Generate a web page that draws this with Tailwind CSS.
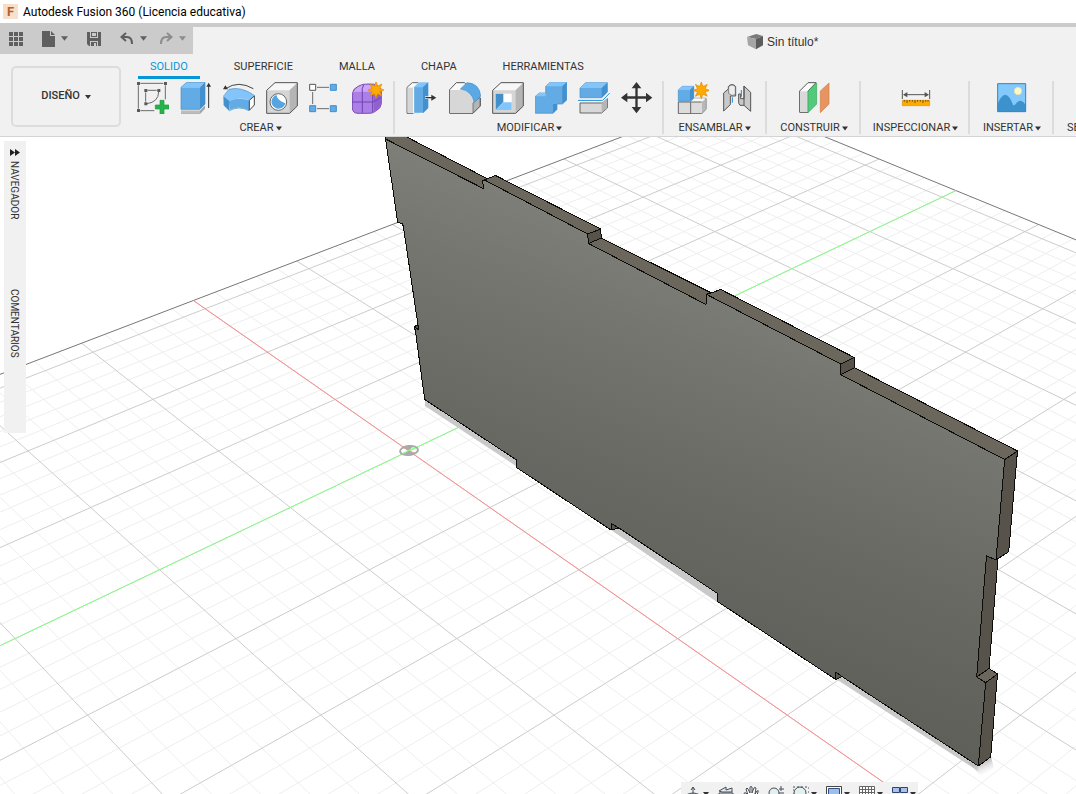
<!DOCTYPE html>
<html lang="es">

<head>
    <meta charset="UTF-8">
    <meta name="viewport" content="width=device-width, initial-scale=1.0">
    <title>Autodesk Fusion 360 (Licencia educativa)</title>
    <script src="https://cdn.jsdelivr.net/npm/@tailwindcss/browser@4"></script>
</head>

<body class="h-screen flex flex-col overflow-hidden bg-white font-['Roboto','Liberation_Sans',sans-serif] text-[11px] text-[#333]">
    <!-- shared glyphs -->
    <svg class="hidden">
        <symbol id="caret" viewBox="0 0 6 4"><path d="M0 0h6L3 4z" fill="currentColor" /></symbol>
        <symbol id="star" viewBox="-25 -25 50 50">
            <path d="M0-24 4.600-11 17-17 11-4.600 24 0 11 4.600 17 17 4.600 11 0 24-4.600 11-17 17-11 4.600-24 0-11-4.600-17-17-4.600-11z" fill="#ffaa00" stroke="#e08a00" stroke-width="2" />
        </symbol>
    </svg>

    <header class="shrink-0">
        <div class="h-[23px] flex items-center gap-[5px] pl-[3px] text-[12px] text-black bg-white">
            <span class="size-[15px] flex items-center justify-center bg-linear-to-br from-[#f9dcc0] to-[#f6e3d4] text-[13px] font-bold text-[#b8622a]">F</span>
            <h1>Autodesk Fusion 360 (Licencia educativa)</h1>
        </div>

        <!-- quick access bar + document title -->
        <div class="flex bg-[#f1f1f1] border-t-4 border-[#cbcbcb]">
            <nav class="w-[193px] h-[27px] pb-1 pl-[9px] flex items-center bg-[#cbcbcb] text-[#5f5f5f]">
                <button aria-label="Panel de datos">
                    <svg class="w-[14px] h-[14px]" viewBox="0 0 14 14" fill="currentColor"><path d="M0 0h4v4H0zM5 0h4v4H5zM10 0h4v4h-4zM0 5h4v4H0zM5 5h4v4H5zM10 5h4v4h-4zM0 10h4v4H0zM5 10h4v4H5zM10 10h4v4h-4z" /></svg>
                </button>
                <button class="ml-[19px] flex items-center gap-[6px]" aria-label="Archivo">
                    <svg class="w-[13px] h-[16px]" viewBox="0 0 13 16" fill="currentColor"><path d="M0 0h8v5h5v11H0z" /><path d="M9 0l4 4H9z" /></svg>
                    <svg class="w-[7px] h-[5px]"><use href="#caret" /></svg>
                </button>
                <button class="ml-[19px]" aria-label="Guardar">
                    <svg class="w-[14px] h-[14px]" viewBox="0 0 14 14"><path d="M0 0h14v14H2L0 12z" fill="currentColor" /><path d="M3 0h8v6H3zM3 9h8v5H3z" fill="#cbcbcb" /><path d="M4 0h6v5H4zM4 10h6v4H4z" fill="currentColor" /><path d="M5 1h4v3H5zM7 11h2v3H7z" fill="#cbcbcb" /></svg>
                </button>
                <button class="ml-[19px] flex items-center gap-[7px]" aria-label="Deshacer">
                    <svg class="w-[13px] h-[13px]" viewBox="0 0 13 13" fill="none" stroke="currentColor" stroke-width="2"><path d="M6 1 1.500 5 6 9M2 5h5q5 0 5 7" /></svg>
                    <svg class="w-[7px] h-[5px]"><use href="#caret" /></svg>
                </button>
                <button class="ml-[13px] flex items-center gap-[6px] text-[#8d8d8d]" aria-label="Rehacer">
                    <svg class="w-[13px] h-[13px]" viewBox="0 0 13 13" fill="none" stroke="currentColor" stroke-width="2"><path d="M7 1 11.500 5 7 9M11 5H6Q1 5 1 12" /></svg>
                    <svg class="w-[7px] h-[5px]"><use href="#caret" /></svg>
                </button>
            </nav>
            <div class="flex-1 pt-[2px] pl-[554px] flex items-center gap-[4px] font-['Liberation_Sans',sans-serif] text-[12px]">
                <svg class="w-[16px] h-[16px]" viewBox="0 0 48 48"><path d="M0 9 28 0 48 6 27 15z" fill="#7a7a7a" /><path d="M0 9 27 15V46L3 34z" fill="#a5a5a5" /><path d="M27 15 48 6V34L27 46z" fill="#5c5c5c" /></svg>
                <span>Sin título*</span>
            </div>
        </div>

        <!-- ribbon -->
        <div class="h-[83px] flex bg-[#f1f1f1] border-b border-[#d4d4d4] overflow-hidden">
            <button class="w-[110px] h-[61px] mt-[12px] ml-[11px] mr-[7px] shrink-0 flex items-center justify-center gap-[5px] border-2 border-[#dcdcdc] rounded-[5px] font-medium">
                DISEÑO <svg class="w-[6px] h-[4px]"><use href="#caret" /></svg>
            </button>
            <div class="flex-1 min-w-0">
                <nav class="h-[25px] pl-[10px] flex gap-[22px]">
                    <a href="#" class="px-3 pt-[5px] leading-4 text-[#0696d7] border-b-[3px] border-[#0696d7]">SOLIDO</a>
                    <a href="#" class="px-3 pt-[5px] leading-4">SUPERFICIE</a>
                    <a href="#" class="px-3 pt-[5px] leading-4">MALLA</a>
                    <a href="#" class="px-3 pt-[5px] leading-4">CHAPA</a>
                    <a href="#" class="px-3 pt-[5px] leading-4">HERRAMIENTAS</a>
                </nav>
                <div class="mt-[2px] flex whitespace-nowrap">
                    <section class="w-[267px] h-[53px] pt-px shrink-0 flex flex-col items-center gap-[6px] border-r-2 border-[#dcdcdc]">
                        <div class="flex gap-[11px]">
                            <button aria-label="Crear boceto">
                                <svg class="size-8" viewBox="0 0 96 96" fill="none" stroke="#6b6b6b" stroke-width="3"><path d="M10 4H79M4 10V80M10 86H52M85 10V52M32 25H59M26 31V59M65 30Q64 60 30 65" /><path d="M0 0h9v9H0zM81 0h9v9h-9zM0 81h9v9H0zM22 21h9v9h-9zM61 21h9v9h-9zM22 61h9v9h-9z" fill="#5a5a5a" stroke="none" /><path d="M69 55h12v14h15v12H81v15H69V81H55V69h14z" fill="#27b34c" stroke="#1b9a3d" stroke-width="2" /></svg>
                            </button>
                            <button aria-label="Extruir">
                                <svg class="size-8" viewBox="0 0 96 96"><path d="M3 86H60L75 70V80L60 96H3z" fill="#a4a4a4" /><path d="M3 86H60V95H3z" fill="#bdbdbd" /><path d="M3 16 20 1H75L60 16z" fill="#83c5fb" /><path d="M3 16H60V82H3z" fill="#62abe4" /><path d="M60 16 75 1V66L60 82z" fill="#4290cd" /><path d="M3 16 20 1H75V66L60 82H3z" fill="none" stroke="#438fc9" stroke-width="2" /><path d="M86 78V10" stroke="#333" stroke-width="3" /><path d="M79 14h14L86 2z" fill="#333" /></svg>
                            </button>
                            <button aria-label="Revolución">
                                <svg class="size-8" viewBox="0 0 96 96"><path d="M1 45 18 22Q55 12 95 41L78 55Q48 43 18 57z" fill="#83c5fb" /><path d="M18 57Q48 44 78 55V85Q48 68 20 84z" fill="#62abe4" /><path d="M1 43 19 57V86L2 69z" fill="#4290cd" /><path d="M1 43 18 22Q55 12 95 41M2 69 19 86Q48 70 78 86" fill="none" stroke="#438fc9" stroke-width="2" /><path d="M79 55 94 42V69L79 85z" fill="#fff" stroke="#444" stroke-width="3" /><path d="M8 20Q46-6 91 20" fill="none" stroke="#444" stroke-width="3" /><path d="M0 22 7 10 15 22z" fill="#333" /></svg>
                            </button>
                            <button aria-label="Agujero">
                                <svg class="size-8" viewBox="0 0 96 96" stroke-linejoin="round"><path d="M2 25 27 2H94V72L71 94H2z" fill="#d5d5d5" /><path d="M2 25 27 2H94L71 25z" fill="#f7f7f7" /><path d="M71 25 94 2V72L71 94z" fill="#b5b5b5" /><path d="M2 25 27 2H94V72L71 94H2z" fill="none" stroke="#555" stroke-width="3" /><circle cx="37" cy="60" r="25" fill="#fff" stroke="#666" stroke-width="3" /><path d="M31 39Q35 56 58 64A21 21 0 1 1 31 39z" fill="#56a5e0" /></svg>
                            </button>
                            <button aria-label="Patrón">
                                <svg class="size-8" viewBox="0 0 96 96"><path d="M24 16H60M24 80H60M11 30V66" stroke="#6b6b6b" stroke-width="3" /><path d="M2 7h18v18H2z" fill="#fff" stroke="#555" stroke-width="3" /><path d="M64 7h18v18H64zM2 71h18v18H2zM64 71h18v18H64z" fill="#62abe4" stroke="#438fc9" stroke-width="3" /></svg>
                            </button>
                            <button aria-label="Crear forma">
                                <svg class="size-8" viewBox="0 0 96 96"><path d="M2 32Q3 20 20 12Q32 5 50 6Q84 4 88 28V65Q88 78 70 88Q63 95 45 94H18Q2 94 1 78z" fill="#ab7ee8" stroke="#7d4bb8" stroke-width="3" /><path d="M4 31Q12 11 42 8Q66 8 78 18Q76 29 58 29H20Q9 29 4 31z" fill="#cda6fa" /><path d="M65 30 87 22V66Q84 78 66 87z" fill="#9160cf" /><path d="M35 9Q28 20 31 33V93M2 60H62Q77 54 87 46M62 31V90" fill="none" stroke="#7044ae" stroke-width="3" /><svg x="46" y="-2" width="52" height="52"><use href="#star" /></svg></svg>
                            </button>
                        </div>
                        <button class="flex items-center gap-[2px] leading-4">CREAR <svg class="w-[6px] h-[5px]"><use href="#caret" /></svg></button>
                    </section>

                    <section class="w-[269px] h-[53px] pt-px pl-[2px] shrink-0 flex flex-col items-center gap-[6px] border-r-2 border-[#dcdcdc]">
                        <div class="flex gap-[11px]">
                            <button aria-label="Pulsar o tirar">
                                <svg class="size-8" viewBox="0 0 96 96"><path d="M3 16 19 2H38V94H3z" fill="#fafafa" stroke="#666" stroke-width="3" /><path d="M5 17H22V92H5z" fill="#d6d6d6" /><path d="M23 16 39 1H67V78L51 94H23z" fill="#62abe4" stroke="#fff" stroke-width="3" /><path d="M23 16 39 1H67L51 16z" fill="#83c5fb" /><path d="M51 16 67 1V78L51 94z" fill="#4290cd" /><path d="M57 47H80" stroke="#fff" stroke-width="8" /><path d="M58 47H80" stroke="#333" stroke-width="4" /><path d="M76 38 91 47 76 56z" fill="#333" /></svg>
                            </button>
                            <button aria-label="Empalme">
                                <svg class="size-8" viewBox="0 0 96 96"><path d="M2 23 22 2H46L94 48V72L72 94H2z" fill="#fafafa" stroke="#555" stroke-width="3" /><path d="M3 24H34Q70 26 72 63V93H3z" fill="#d7d7d7" /><path d="M72 63 93 46V72L72 93z" fill="#b5b5b5" stroke="#555" stroke-width="2" /><path d="M34 21 54 2Q92 4 95 43L75 61Q70 27 34 21z" fill="#5ba9e4" stroke="#438fc9" stroke-width="2" /></svg>
                            </button>
                            <button aria-label="Vaciado">
                                <svg class="size-8" viewBox="0 0 96 96"><path d="M2 25 27 2H94V72L71 94H2z" fill="#d5d5d5" /><path d="M2 25 27 2H94L71 25z" fill="#f7f7f7" /><path d="M71 25 94 2V72L71 94z" fill="#b5b5b5" /><path d="M2 25 27 2H94V72L71 94H2z" fill="none" stroke="#555" stroke-width="3" /><path d="M11 35H59V84H11z" fill="#fff" /><path d="M11 35H34V60L11 84z" fill="#438fc9" /><path d="M11 84 34 61H59V84z" fill="#83c5fb" /></svg>
                            </button>
                            <button aria-label="Combinar">
                                <svg class="size-8" viewBox="0 0 96 96" stroke="#438fc9" stroke-width="2"><path d="M1 43 13 33H32V13L45 1H95V54L82 66H66V82L54 94H1z" fill="#62abe4" /><path d="M1 43 13 33H32V43zM32 13 45 1H95L82 13z" fill="#83c5fb" stroke="none" /><path d="M82 13 95 1V54L82 66zM54 66H66V82L54 94z" fill="#4290cd" stroke="none" /></svg>
                            </button>
                            <button aria-label="Dividir cuerpo">
                                <svg class="size-8" viewBox="0 0 96 96"><path d="M6 18 23 2H88V30L71 47H6z" fill="#62abe4" stroke="#438fc9" stroke-width="2" /><path d="M6 18 23 2H88L71 18z" fill="#83c5fb" /><path d="M71 18 88 2V30L71 47z" fill="#4290cd" /><path d="M6 63H71L88 50V78L71 93H6z" fill="#d8d8d8" stroke="#666" stroke-width="3" /><path d="M71 63 87 50V78L71 92z" fill="#b5b5b5" /><path d="M0 55H74L95 33" fill="none" stroke="#fff" stroke-width="8" /><path d="M0 55H74L95 33" fill="none" stroke="#0c8be0" stroke-width="3" /></svg>
                            </button>
                            <button aria-label="Desplazar">
                                <svg class="size-8" viewBox="0 0 96 96" fill="#333"><path d="M43 12h7v31h31v7H50v31h-7V50H12v-7h31z" /><path d="M46.500 0 61 19H32zM46.500 94 61 75H32zM0 47 19 32V61zM94 47 75 32V61z" /></svg>
                            </button>
                        </div>
                        <button class="flex items-center gap-[2px] leading-4">MODIFICAR <svg class="w-[6px] h-[5px]"><use href="#caret" /></svg></button>
                    </section>

                    <section class="w-[103px] h-[53px] pt-px shrink-0 flex flex-col items-center gap-[6px] border-r-2 border-[#dcdcdc]">
                        <div class="flex gap-[11px]">
                            <button aria-label="Nuevo componente">
                                <svg class="size-8" viewBox="0 0 96 96"><path d="M4 60H39L52 49H87V82L74 95H4z" fill="#dcdcdc" stroke="#666" stroke-width="3" /><path d="M39 60 52 49H87L74 60z" fill="#f8f8f8" /><path d="M41 60V94M41 60H74" stroke="#666" stroke-width="3" /><path d="M75 60 86 50V82L75 93z" fill="#b8b8b8" /><path d="M4 24 16 13H50V48L39 58H4z" fill="#62abe4" stroke="#438fc9" stroke-width="2" /><path d="M4 24 16 13H50L39 24z" fill="#83c5fb" /><path d="M39 24 50 13V48L39 58z" fill="#4290cd" /><svg x="47" y="-1" width="52" height="52"><use href="#star" /></svg></svg>
                            </button>
                            <button aria-label="Unión">
                                <svg class="size-8" viewBox="0 0 96 96" stroke="#555" stroke-width="3"><path d="M11 33 25 21V14Q28 8 36 8T47 14V42H31V68L11 87z" fill="#c9c9c9" /><path d="M26 20V34Q36 45 46 38V14Q36 4 26 14z" fill="#ededed" stroke-width="2" /><path d="M72 12 92 31V88L72 70H60Q56 66 56 60V36H62V50H72z" fill="#c9c9c9" /><path d="M72 12V70" /><path d="M37 46V62M64 24V44" stroke="#1686dc" /></svg>
                            </button>
                        </div>
                        <button class="flex items-center gap-[2px] leading-4">ENSAMBLAR <svg class="w-[6px] h-[5px]"><use href="#caret" /></svg></button>
                    </section>

                    <section class="w-[94px] h-[53px] pt-px pl-[2px] shrink-0 flex flex-col items-center gap-[6px] border-r-2 border-[#dcdcdc]">
                        <button aria-label="Plano desfasado">
                            <svg class="size-8" viewBox="0 0 96 96"><path d="M5 27 30 2H54L30 27V91H5z" fill="#fafafa" stroke="#555" stroke-width="3" /><path d="M6 28H29V90H6z" fill="#d9d9d9" /><path d="M30 27 56 3V66L30 92z" fill="#52c97b" stroke="#36a65d" stroke-width="2" /><path d="M67 27 93 3V66L67 92z" fill="#e79560" stroke="#cf7a43" stroke-width="2" /></svg>
                        </button>
                        <button class="flex items-center gap-[2px] leading-4">CONSTRUIR <svg class="w-[6px] h-[5px]"><use href="#caret" /></svg></button>
                    </section>

                    <section class="w-[109px] h-[53px] pt-px pl-[2px] shrink-0 flex flex-col items-center gap-[6px] border-r-2 border-[#dcdcdc]">
                        <button aria-label="Medir">
                            <svg class="size-8" viewBox="0 0 96 96"><path d="M7 24V51M89 24V51M14 38H82" stroke="#555" stroke-width="3" /><path d="M9 38 22 30V46zM87 38 74 30V46z" fill="#555" /><path d="M7 55H89V71H7z" fill="#ffaa00" stroke="#e09600" stroke-width="2" /><path d="M13 54v5M21 54v9M29 54v5M37 54v5M45 54v9M53 54v5M61 54v5M69 54v9M77 54v5M84 54v5" stroke="#725000" stroke-width="3" /></svg>
                        </button>
                        <button class="flex items-center gap-[2px] leading-4">INSPECCIONAR <svg class="w-[6px] h-[5px]"><use href="#caret" /></svg></button>
                    </section>

                    <section class="w-[84px] h-[53px] pt-px pl-[2px] shrink-0 flex flex-col items-center gap-[6px] border-r-2 border-[#dcdcdc]">
                        <button aria-label="Insertar imagen">
                            <svg class="size-8" viewBox="0 0 96 96"><path d="M5 5H89V89H5z" fill="#83c9fc" /><path d="M5 66Q14 40 28 38Q40 38 51 68Q54 73 59 66Q67 55 74 56Q82 57 89 68V89H5z" fill="#3c92cd" /><circle cx="66" cy="27" r="11" fill="#fdf8c9" stroke="#eee29a" stroke-width="2" /><path d="M5 5H89V89H5z" fill="none" stroke="#3485c0" stroke-width="3" /></svg>
                        </button>
                        <button class="flex items-center gap-[2px] leading-4">INSERTAR <svg class="w-[6px] h-[5px]"><use href="#caret" /></svg></button>
                    </section>

                    <section class="h-[53px] pt-[39px] px-[13px] shrink-0">
                        <button class="flex items-center gap-[2px] leading-4">SELECCIONAR <svg class="w-[6px] h-[5px]"><use href="#caret" /></svg></button>
                    </section>
                </div>
            </div>
        </div>
    </header>

    <main class="relative flex-1 min-h-0 overflow-hidden">
        <svg class="w-full h-full" viewBox="0 137 1076 657" preserveAspectRatio="xMinYMin slice">
            <defs>
                <linearGradient id="face" gradientUnits="userSpaceOnUse" x1="385" y1="139" x2="251" y2="498">
                    <stop offset="0" stop-color="#7e7f78" />
                    <stop offset=".25" stop-color="#74756e" />
                    <stop offset=".6" stop-color="#696963" />
                    <stop offset="1" stop-color="#5f5f59" />
                </linearGradient>
                <linearGradient id="fade" gradientUnits="userSpaceOnUse" x1="982" y1="762" x2="988" y2="776">
                    <stop offset="0" stop-color="#bbb" />
                    <stop offset="1" stop-color="#fff" stop-opacity="0" />
                </linearGradient>
            </defs>
            <g fill="none">
                <path id="grid-minor" stroke="#eeeeee" />
                <path id="grid-major" stroke="#cccccc" />
                <path id="grid-edge" stroke="#777" />
                <path id="axis-x" stroke="#ff8c8c" />
                <path id="axis-y" stroke="#86ff86" />
            </g>
            <!-- origin marker -->
            <g transform="rotate(-6 409 450.500)">
                <ellipse cx="409" cy="450.500" rx="9" ry="4.500" fill="none" stroke="#aaa" stroke-width="2" />
                <path d="M409 450.500 402 446.500Q407 444.500 414 446.500zM409 450.500 403 454Q409 456 415 453.500z" fill="#aaa" />
            </g>
            <path d="M404 447.500 413 453.500" stroke="#ff8c8c" />
            <path d="M402 453.500 415 447.500" stroke="#86ff86" />
            <!-- board: shadow, side faces, front face -->
            <path d="M425 400 978 764 978 771 836 679 717 602 611 530 516 466 425 406z" fill="#c9c9c9" />
            <path d="M968 762 991 757 994 768 981 776z" fill="url(#fade)" />
            <g stroke="#0c0c0a" stroke-linejoin="round" shape-rendering="crispEdges">
                <g fill="#6c675d">
                    <path d="M385.500 139 385 134H401L487 178.500 482.500 181 483.700 188.700z" />
                    <path d="M484 180 495.500 175.500 600.700 229 587.700 234z" />
                    <path d="M588.500 243.500 601.300 238 710.500 292.500 706.700 294.500 706 304.500z" />
                    <path d="M706.700 294.500 720.700 289.500 854.300 357.500 840.700 364z" />
                    <path d="M840.700 374.700 854.300 367.700 1017.500 451 1004.700 459.500z" />
                </g>
                <g fill="#57534a">
                    <path d="M587.700 234 600.700 229 601.300 238 588.500 243.500z" />
                    <path d="M840.700 364 854.300 357.500V367.700L840.700 374.700z" />
                    <path d="M1004.700 459.500 1017.500 451 1008.700 551.700 996 560z" />
                    <path d="M986.500 555.700 996 560 998 558.500 989 669 976.700 677z" />
                    <path d="M985.700 682.700 997.500 674 990.700 757 978.300 766z" />
                    <path d="M414.300 326.500 418 325 418.700 330H415z" />
                    <path d="M611 523.500 619 528 611 530z" />
                    <path d="M835.700 672 842 676.500 835.700 679.500z" />
                </g>
                <path d="M976.700 677 989 668.500 997.500 674 985.700 682.700z" fill="#6c675d" />
                <path fill="url(#face)" d="M385.500 139 483.700 188.700 482.500 180 484.500 180 587.700 234 588.500 243.500 706 304.500 706.700 294.500 840.700 364V374.700L1004.700 459.500 996 560 986.500 555.700 976.700 677 985.700 682.700 978.300 766 842 676.500 835.700 672V679.500L717.500 601.500V593.500L619 528 611 523.500V530L516.500 467.500V460L424.700 399.500 415.300 330 414.300 326.500 418.700 330 418 325 403.300 226 402 223.500 397.700 222.300z" />
            </g>
        </svg>

        <aside class="absolute left-1 top-1 w-[22px] h-[292px] pt-2 flex flex-col items-center bg-[#f1f1f1] text-[10px]">
            <svg class="w-[10px] h-[7px] shrink-0" viewBox="0 0 10 7"><path d="M0 0 5 3.500 0 7zM5 0l5 3.500L5 7z" fill="#222" /></svg>
            <button class="[writing-mode:vertical-rl] mt-[5px] mr-[2px] h-[128px] text-left leading-3">NAVEGADOR</button>
            <button class="[writing-mode:vertical-rl] mr-[2px] text-left leading-3">COMENTARIOS</button>
        </aside>

        <!-- navigation bar, half below the window edge -->
        <nav class="absolute left-[681px] -bottom-3 w-[237px] h-6 pl-1 pt-[4px] flex items-start gap-[9px] bg-[#f1f1f1] text-[#333]">
            <button class="flex items-center gap-[2px]" aria-label="Órbita">
                <svg class="size-4" viewBox="0 0 16 16" fill="none" stroke="#444c55"><path d="M8 1v14M6 4l2-3 2 3M1 9q7-4 14 0M1 9q7 4 14 0" /></svg>
                <svg class="w-[6px] h-[4px]"><use href="#caret" /></svg>
            </button>
            <button aria-label="Mirar a">
                <svg class="size-4" viewBox="0 0 16 16" fill="#e4eaec" stroke="#444c55"><path d="M1 5 8 1v3l6-2v4H4zM1 7h14v7H1z" /></svg>
            </button>
            <button aria-label="Encuadre">
                <svg class="size-4" viewBox="0 0 16 16" fill="#fff" stroke="#444c55"><path d="M5 15 1 8q0-2 2-1l2 2-2-6q1-2 2 0l2 4V1q1-1 2 0v6l2-5q1-1 2 0l-1 6 2-3q2-1 1 1l-3 9z" /></svg>
            </button>
            <button aria-label="Zoom">
                <svg class="size-4" viewBox="0 0 16 16" fill="none" stroke="#444c55"><circle cx="6" cy="7" r="5" fill="#e2f0f0" /><path d="M2 11l-2 4M13 0v5M11 3h5M11 7h5" /></svg>
            </button>
            <button class="flex items-center gap-[2px]" aria-label="Ventana de zoom">
                <svg class="size-4" viewBox="0 0 16 16" fill="none" stroke="#444c55"><path d="M0 1h16v14H0z" stroke-dasharray="2 2" /><circle cx="7" cy="7" r="6" fill="#e2f0f0" /></svg>
                <svg class="w-[6px] h-[4px]"><use href="#caret" /></svg>
            </button>
            <button class="flex items-center gap-[2px]" aria-label="Configuración de visualización">
                <svg class="size-4" viewBox="0 0 16 16"><path d="M.5 .5h15v13H.5z" fill="#fff" stroke="#444" /><path d="M2.500 2.500h11v9h-11z" fill="#9fc0e6" stroke="#2f4f86" /></svg>
                <svg class="w-[6px] h-[4px]"><use href="#caret" /></svg>
            </button>
            <button class="flex items-center gap-[2px]" aria-label="Rejilla y ajustes">
                <svg class="size-4" viewBox="0 0 16 16" fill="#fff" stroke="#666"><path d="M.5 .5h15v15H.5zM3.500 0v15M6.500 0v15M9.500 0v15M12.500 0v15M0 3.500h16M0 6.500h16M0 9.500h16M0 12.500h16" /></svg>
                <svg class="w-[6px] h-[4px]"><use href="#caret" /></svg>
            </button>
            <button class="flex items-center gap-[2px]" aria-label="Ventanas gráficas">
                <svg class="size-4" viewBox="0 0 16 16" fill="#a9c3e6" stroke="#2f4473"><path d="M.5 1.500h7v5h-7zM8.500 1.500h7v5h-7zM.5 8.500h7v5h-7zM8.500 8.500h7v5h-7z" /></svg>
                <svg class="w-[6px] h-[4px]"><use href="#caret" /></svg>
            </button>
        </nav>
    </main>
</body>
<script>
    // ground plane limits, in major cells from the origin
    const U_MIN = -3.2, U_MAX = 6, V_MIN = -4, V_MAX = 6.2;

    // perspective projection of a ground point
    function project(u, v) {
        let w = 1 - 0.0458 * (u - v);
        let x = (409 + 58.5 * u + 132 * v) / w;
        let y = (451 + 33.28 * (u - v)) / w;
        return `${x.toFixed(1)} ${y.toFixed(1)}`;
    }

    function line(u1, v1, u2, v2) {
        return `M${project(u1, v1)}L${project(u2, v2)}`;
    }

    function draw(id, d) {
        document.getElementById(id).setAttribute('d', d);
    }

    // five minor cells per major one
    let minor = '', major = '';
    for (let i = -20; i <= 30; i++) {
        let alongV = i >= -15 ? line(i / 5, V_MIN, i / 5, V_MAX) : '';
        let alongU = line(U_MIN, i / 5, U_MAX, i / 5);
        if (i % 5 == 0) {
            major += alongV + alongU;
        } else {
            minor += alongV + alongU;
        }
    }

    draw('grid-minor', minor);
    draw('grid-major', major);
    draw('grid-edge', line(U_MIN, V_MIN, U_MIN, V_MAX) + line(U_MIN, V_MAX, U_MAX, V_MAX));
    draw('axis-x', line(U_MIN, 0, U_MAX, 0));
    draw('axis-y', line(0, V_MIN, 0, V_MAX));
</script>

</html>
